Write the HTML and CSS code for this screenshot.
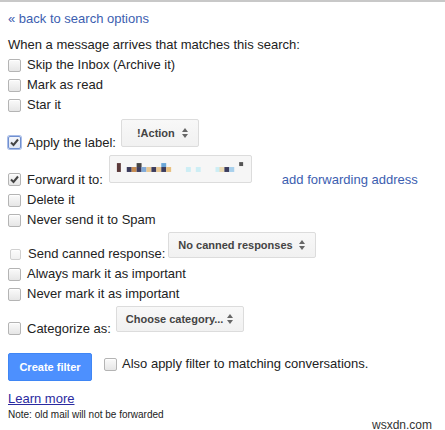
FILE: index.html
```html
<!DOCTYPE html>
<html>
<head>
<meta charset="utf-8">
<link rel="stylesheet" href="styles.css">
</head>
<body>
<div class="page">
  <a class="back" href="#">« back to search options</a>
  <div class="intro">When a message arrives that matches this search:</div>

  <div class="row"><span class="cb"></span><span>Skip the Inbox (Archive it)</span></div>
  <div class="row"><span class="cb"></span><span>Mark as read</span></div>
  <div class="row"><span class="cb"></span><span>Star it</span></div>

  <div class="row sel-row r-label">
    <span class="cb checked focus"><svg viewBox="0 0 13 13" width="13" height="13"><path d="M3 6.5 L5.5 9 L10 3.5" fill="none" stroke="#444" stroke-width="2"/></svg></span>
    <span class="lbl">Apply the label:</span>
    <span class="select s-action">!Action<span class="arrows"></span></span>
  </div>

  <div class="row sel-row r-fwd">
    <span class="cb checked"><svg viewBox="0 0 13 13" width="13" height="13"><path d="M3 6.5 L5.5 9 L10 3.5" fill="none" stroke="#444" stroke-width="2"/></svg></span>
    <span class="lbl">Forward it to:</span>
    <span class="select s-fwd">
      <svg class="pix" width="143" height="28" viewBox="0 0 143 28">
        <rect x="7" y="8" width="4" height="9" fill="#5b3a3a"/>
        <rect x="17" y="12" width="5" height="5" fill="#3b3b5c"/>
        <rect x="22" y="12" width="5" height="5" fill="#c58a4f"/>
        <rect x="27" y="8" width="5" height="4" fill="#444"/>
        <rect x="27" y="12" width="5" height="5" fill="#3b3b5c"/>
        <rect x="32" y="12" width="5" height="5" fill="#7fa9d8"/>
        <rect x="37" y="12" width="5" height="5" fill="#e8c690"/>
        <rect x="42" y="12" width="5" height="5" fill="#3b3b5c"/>
        <rect x="47" y="12" width="5" height="5" fill="#e8c690"/>
        <rect x="52" y="8" width="5" height="4" fill="#6aa6d8"/>
        <rect x="52" y="12" width="5" height="5" fill="#3b3b5c"/>
        <rect x="57" y="12" width="5" height="5" fill="#e8c080"/>
        <rect x="77" y="12" width="5" height="5" fill="#cdeef5"/>
        <rect x="87" y="12" width="5" height="5" fill="#cdeef5"/>
        <rect x="107" y="12" width="5" height="5" fill="#cdeef5"/>
        <rect x="111" y="12" width="5" height="5" fill="#eadab4"/>
        <rect x="116" y="12" width="5" height="5" fill="#3b3b5c"/>
        <rect x="121" y="12" width="5" height="5" fill="#a8d0ec"/>
        <rect x="131" y="7" width="4" height="4" fill="#555"/>
      </svg>
    </span>
    <a class="addfwd" href="#">add forwarding address</a>
  </div>

  <div class="row"><span class="cb"></span><span>Delete it</span></div>
  <div class="row"><span class="cb"></span><span>Never send it to Spam</span></div>

  <div class="row sel-row r-canned">
    <span class="cb disabled"></span>
    <span class="lbl">Send canned response:</span>
    <span class="select s-canned">No canned responses<span class="arrows"></span></span>
  </div>

  <div class="row"><span class="cb"></span><span>Always mark it as important</span></div>
  <div class="row"><span class="cb"></span><span>Never mark it as important</span></div>

  <div class="row sel-row r-cat">
    <span class="cb"></span>
    <span class="lbl">Categorize as:</span>
    <span class="select s-cat">Choose category...<span class="arrows"></span></span>
  </div>

  <div class="actions">
    <span class="btn">Create filter</span>
    <span class="cb"></span>
    <span class="also">Also apply filter to matching conversations.</span>
  </div>

  <a class="learn" href="#">Learn more</a>
  <div class="note">Note: old mail will not be forwarded</div>
  <div class="wm">wsxdn.com</div>
</div>
</body>
</html>
```

FILE: styles.css
```css
html, body {
  margin: 0;
  padding: 0;
  background: #fff;
}
body {
  border-top: 2px solid #c8c8c8;
  font-family: "Liberation Sans", Arial, sans-serif;
  font-size: 13px;
  color: #222;
}
.page {
  padding: 0 8px;
  position: relative;
  height: 428px;
  box-sizing: border-box;
}
.back {
  display: block;
  color: #3c5eb0;
  text-decoration: none;
  line-height: 20px;
  margin-top: 7px;
  width: max-content;
}
.intro {
  line-height: 20px;
  margin-top: 6px;
}
.row {
  display: flex;
  align-items: center;
  height: 20px;
  line-height: 20px;
}
.cb {
  width: 11px;
  height: 11px;
  border: 1px solid #b4b4b4;
  border-radius: 2px;
  background: linear-gradient(#fafafa, #e6e6e6);
  margin-right: 6px;
  flex: none;
  position: relative;
  box-shadow: inset 0 1px 1px rgba(255,255,255,0.8);
}
.cb svg {
  position: absolute;
  left: -1px;
  top: -1px;
}
.cb.focus {
  border-color: #6f8fd0;
  box-shadow: 0 0 0 1px #a9bde8;
  background: linear-gradient(#f4f6fb, #dfe5f2);
}
.cb.disabled {
  border-color: #d0d0d0;
  background: linear-gradient(#fcfcfc, #f0f0f0);
  width: 9px;
  height: 9px;
  margin-left: 2px;
  margin-right: 7px;
}
.sel-row {
  align-items: flex-end;
  height: auto;
}
.sel-row .cb {
  margin-bottom: 4px;
}
.select {
  display: flex;
  align-items: center;
  box-sizing: border-box;
  border: 1px solid #dcdcdc;
  border-radius: 2px;
  background: linear-gradient(#f8f8f8, #f1f1f1);
  font-size: 11px;
  font-weight: bold;
  color: #444;
  line-height: 1;
  position: relative;
}
.arrows {
  position: absolute;
  right: 9px;
  top: 50%;
  margin-top: -5px;
  width: 7px;
  height: 10px;
}
.arrows::before, .arrows::after {
  content: "";
  position: absolute;
  left: 0;
  border-left: 3.5px solid transparent;
  border-right: 3.5px solid transparent;
}
.arrows::before {
  top: 0;
  border-bottom: 4px solid #666;
}
.arrows::after {
  bottom: 0;
  border-top: 4px solid #666;
}
.s-action {
  width: 78px;
  height: 28px;
  margin: 4px 0 6px 5px;
  padding-left: 15px;
}
.s-fwd {
  width: 143px;
  height: 28px;
  margin: 2px 0 7px 6px;
  padding: 0;
  background: #f6f6f6;
}
.pix { display: block; }
.addfwd {
  color: #3c5eb0;
  text-decoration: none;
  margin-left: 30px;
}
.s-canned {
  width: 148px;
  height: 26px;
  margin: 2px 0 6px 3px;
  padding-left: 9px;
}
.s-cat {
  width: 128px;
  height: 26px;
  margin: 2px 0 7px 5px;
  padding-left: 9px;
}
.actions {
  display: flex;
  align-items: flex-start;
  margin-top: 14px;
  height: 28px;
}
.btn {
  box-sizing: border-box;
  width: 84px;
  height: 28px;
  background: #4d90fe;
  border: 1px solid #3f86f5;
  border-radius: 2px;
  color: #fff;
  font-size: 11px;
  font-weight: bold;
  display: flex;
  align-items: center;
  justify-content: center;
  margin-right: 12px;
}
.actions .cb {
  margin-right: 5px;
  margin-top: 5px;
}
.also {
  line-height: 20px;
  margin-top: 1px;
}
.learn {
  display: block;
  color: #2a2aa0;
  text-decoration: underline;
  line-height: 20px;
  margin-top: 8px;
  width: max-content;
}
.note {
  font-size: 10px;
  line-height: 12px;
  margin-top: 0;
}
.wm {
  position: absolute;
  right: 13px;
  top: 410px;
  font-size: 12px;
  line-height: 12px;
  color: #333;
}
```
